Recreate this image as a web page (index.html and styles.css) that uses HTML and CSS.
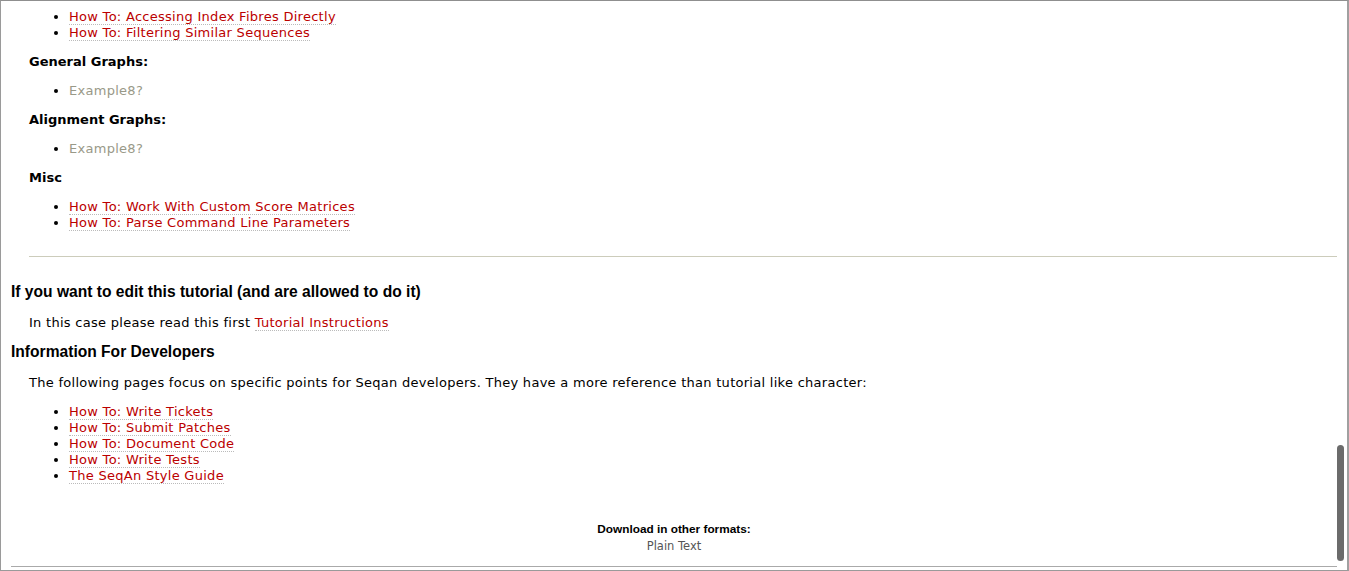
FILE: index.html
```html
<!DOCTYPE html>
<html>
<head>
<meta charset="utf-8">
<title>Tutorial</title>
<link rel="stylesheet" href="styles.css">
</head>
<body>
<div class="frame">
  <div class="viewport">
    <div class="content">
      <div class="page">
        <div class="section">
          <ul class="links first">
            <li><a class="wiki" href="#">How To: Accessing Index Fibres Directly</a></li>
            <li><a class="wiki" href="#">How To: Filtering Similar Sequences</a></li>
          </ul>
          <p><strong>General Graphs:</strong></p>
          <ul class="links">
            <li><a class="missing" href="#">Example8?</a></li>
          </ul>
          <p><strong>Alignment Graphs:</strong></p>
          <ul class="links">
            <li><a class="missing" href="#">Example8?</a></li>
          </ul>
          <p><strong>Misc</strong></p>
          <ul class="links">
            <li><a class="wiki" href="#">How To: Work With Custom Score Matrices</a></li>
            <li><a class="wiki" href="#">How To: Parse Command Line Parameters</a></li>
          </ul>
          <hr class="rule">
        </div>
        <h2 class="heading first-heading">If you want to edit this tutorial (and are allowed to do it)</h2>
        <div class="section">
          <p class="last-para">In this case please read this first <a class="wiki" href="#">Tutorial Instructions</a></p>
        </div>
        <h2 class="heading">Information For Developers</h2>
        <div class="section">
          <p>The following pages focus on specific points for Seqan developers. They have a more reference than tutorial like character:</p>
          <ul class="links">
            <li><a class="wiki" href="#">How To: Write Tickets</a></li>
            <li><a class="wiki" href="#">How To: Submit Patches</a></li>
            <li><a class="wiki" href="#">How To: Document Code</a></li>
            <li><a class="wiki" href="#">How To: Write Tests</a></li>
            <li><a class="wiki" href="#">The SeqAn Style Guide</a></li>
          </ul>
        </div>
        <div class="altlinks">
          <h3 class="altlinks-title">Download in other formats:</h3>
          <a class="altlink" href="#">Plain Text</a>
        </div>
      </div>
      <div class="footer-line"></div>
    </div>
    <div class="scrollbar"><div class="thumb"></div></div>
  </div>
</div>
</body>
</html>
```
FILE: styles.css
```css
html, body {
  margin: 0;
  padding: 0;
  background: #fff;
}
body {
  font-family: "DejaVu Sans", Verdana, sans-serif;
  font-size: 13px;
  line-height: 16px;
  letter-spacing: 0.28px;
  color: #000;
}
.frame {
  width: 1349px;
  height: 571px;
  box-sizing: border-box;
  border-top: 1px solid #8f8f8f;
  border-left: 1px solid #9a9a9a;
  border-right: 2px solid #a0a0a0;
  border-bottom: 1px solid #9a9a9a;
  overflow: hidden;
}
.viewport {
  display: flex;
  height: 100%;
}
.content {
  flex: 1;
  padding: 0 0 0 10px;
  min-width: 0;
  display: flex;
  flex-direction: column;
}
.page {
  display: block;
}
.scrollbar {
  width: 8px;
  padding: 0 2px 9px 0;
  display: flex;
  flex-direction: column;
  justify-content: flex-end;
}
.thumb {
  width: 7px;
  height: 116px;
  background: #6b6b6b;
  border-radius: 4px;
}
.section {
  margin-left: 18px;
}
p {
  margin: 13px 0;
}
p.last-para {
  margin-bottom: 12px;
}
strong {
  letter-spacing: 0;
}
ul.links {
  margin: 13px 0;
  padding-left: 40px;
}
ul.links.first {
  margin-top: 8px;
}
a {
  text-decoration: none;
}
a.wiki {
  color: #b00;
  border-bottom: 1px dotted #bbb;
}
a.missing {
  color: #998;
}
.rule {
  border: none;
  border-top: 1px solid #ccb;
  height: 0;
  margin: 25px 0 24px;
}
.heading {
  font-family: "Liberation Sans", Arial, sans-serif;
  font-size: 15.6px;
  line-height: 18px;
  letter-spacing: 0;
  font-weight: bold;
  margin: 11px 0 14px;
}
.first-heading {
  margin-top: 26px;
}
.altlinks {
  text-align: center;
  margin-top: 37px;
  letter-spacing: 0;
}
.altlinks-title {
  font-family: "Liberation Sans", Arial, sans-serif;
  font-size: 11.8px;
  line-height: 16px;
  font-weight: bold;
  margin: 0;
}
.altlink {
  font-family: "DejaVu Sans", sans-serif;
  font-size: 11.5px;
  line-height: 18px;
  color: #555;
}
.footer-line {
  margin-top: auto;
  margin-bottom: 3px;
  border-top: 1px solid #aaa;
}
```
